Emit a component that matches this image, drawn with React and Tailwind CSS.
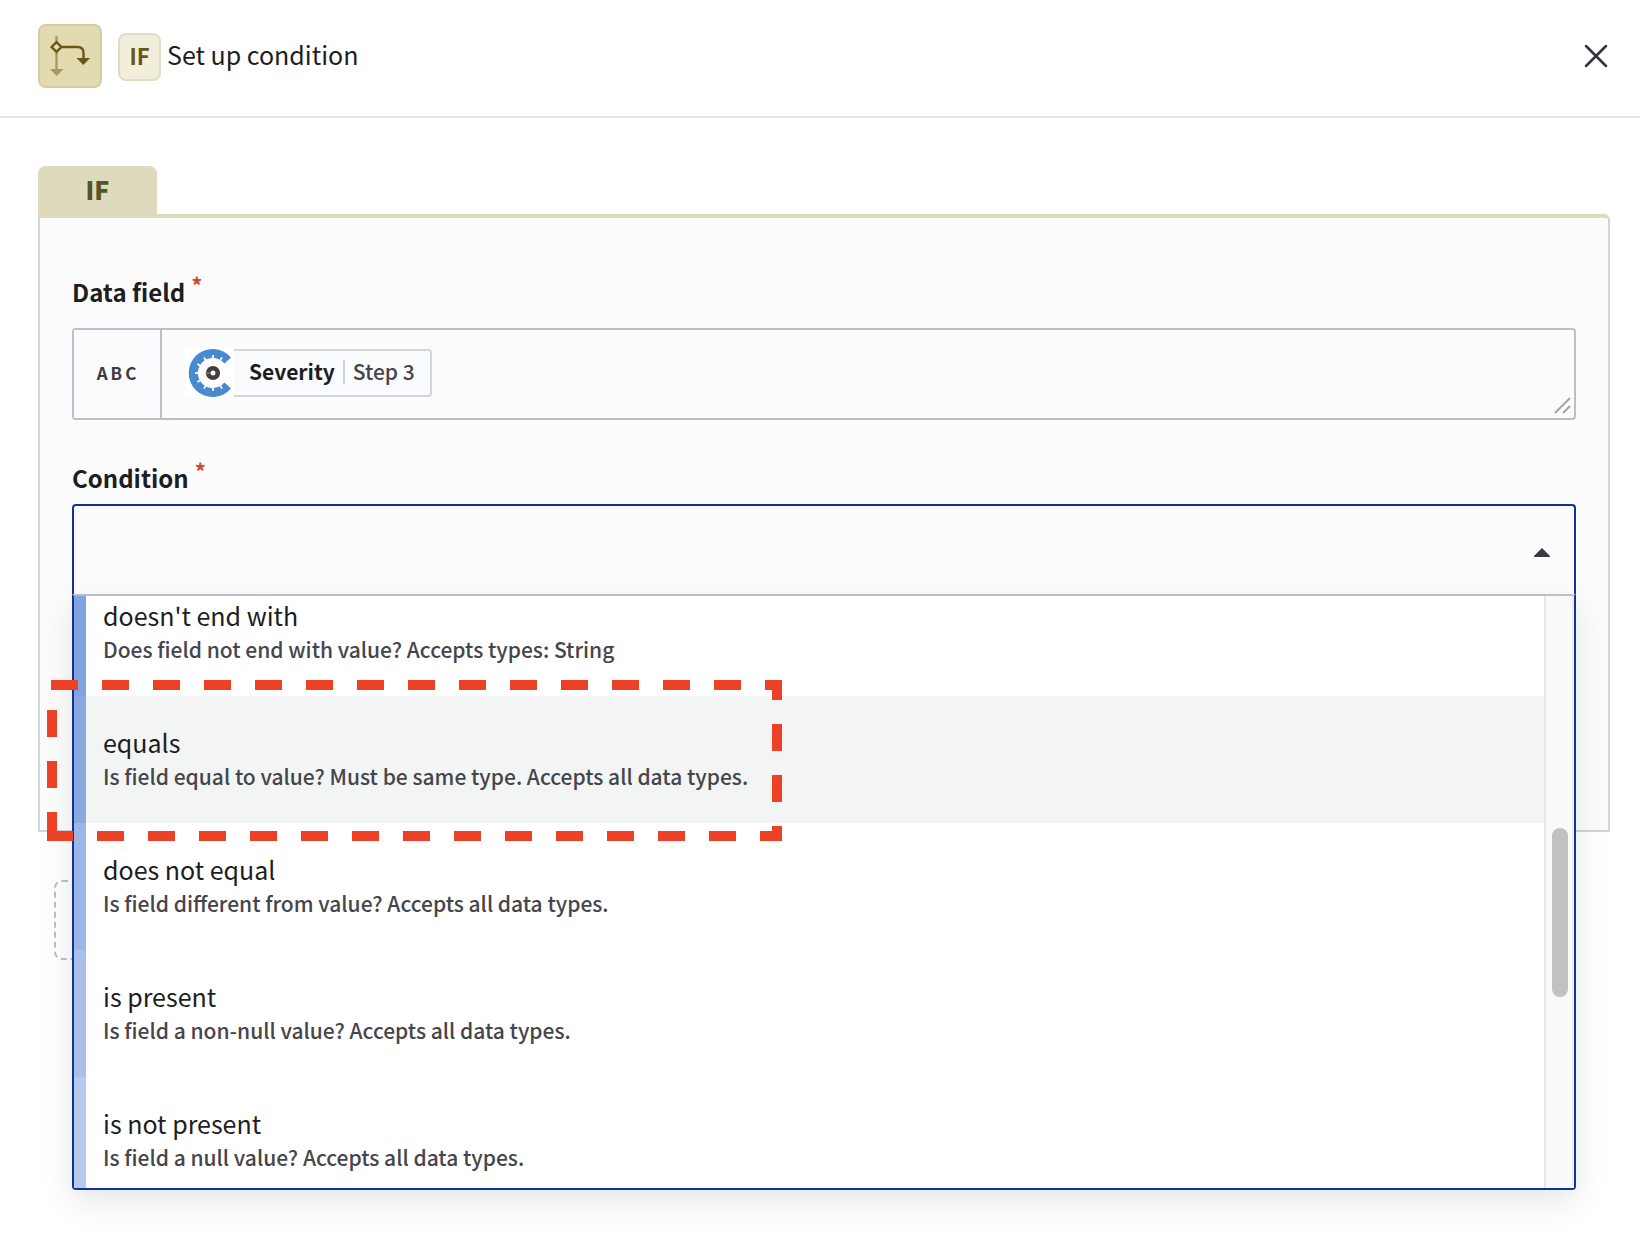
import React from "react";

const OPTIONS = [
  { title: "doesn't end with", text: "Does field not end with value? Accepts types: String", bar: "bg-[#82a3e0]", row: "bg-white" },
  { title: "equals", text: "Is field equal to value? Must be same type. Accepts all data types.", bar: "bg-[#88a8de]", row: "bg-[#f3f5f5]", selected: true },
  { title: "does not equal", text: "Is field different from value? Accepts all data types.", bar: "bg-[#9cb6e7]", row: "bg-white" },
  { title: "is present", text: "Is field a non-null value? Accepts all data types.", bar: "bg-[#a9c0ea]", row: "bg-white" },
  { title: "is not present", text: "Is field a null value? Accepts all data types.", bar: "bg-[#b7caee]", row: "bg-white" },
];

function BranchIcon() {
  return (
    <svg width="60" height="60" viewBox="40 26 60 60" fill="none" aria-hidden="true">
      <path d="M56.5 36V70" stroke="#a89860" strokeWidth="2.4" />
      <path d="M49.8 69H63.6L56.7 76Z" fill="#a89860" />
      <path d="M62 47H77.5Q83.5 47 83.5 53V59" stroke="#6b5517" strokeWidth="2.4" />
      <path d="M76.5 58H90L83.3 65Z" fill="#6b5517" />
      <path d="M56.5 42.2L61.4 47L56.5 51.8L51.6 47Z" fill="#e2dbb0" stroke="#6b5517" strokeWidth="2.4" />
    </svg>
  );
}

function CogLogo() {
  const ticks = [60, 90, 120, 150, 180, 210, 240, 270, 300];
  return (
    <svg className="shrink-0 bg-white" width="48" height="48" viewBox="-27 -24 48 48" fill="none" aria-hidden="true">
      <path d="M18 -15.5A24 24 0 1 0 18 15.5L11.5 9.5A15 15 0 1 1 11.5 -9.5Z" fill="#478bce" />
      {ticks.map((a) => (
        <path key={a} d="M13 0H18" stroke="#fff" strokeWidth="1.8" transform={`rotate(${a})`} />
      ))}
      <circle r="4.8" stroke="#453c3e" strokeWidth="4.6" />
      <path d="M-7.5 0H-3" stroke="#8d8788" strokeWidth="1.2" />
    </svg>
  );
}

function Label({ id, htmlFor, children }) {
  return (
    <label id={id} htmlFor={htmlFor} className="flex items-start gap-1.5 text-[24px] leading-9 font-bold text-[#1d1d22]">
      {children}
      <span className="text-[22px] leading-5 text-[#cb4a2c]">*</span>
    </label>
  );
}

export default function App() {
  return (
    <div className="min-h-screen overflow-hidden bg-white font-['Noto_Sans_CJK_SC',sans-serif] text-[#1d1d22]">
      <header className="flex h-[118px] items-start border-b-2 border-[#e3e6ea] pt-6 pr-[26px] pl-[38px]">
        <div className="h-16 w-16 rounded-lg border-2 border-[#d2cba3] bg-[#e2dbb0]">
          <BranchIcon />
        </div>
        <div className="flex h-16 grow items-center">
          <span className="mt-0.5 ml-4 flex h-12 w-[43px] items-center justify-center rounded-lg border-2 border-[#e0ddcb] bg-[#f1eed9] pb-1 text-[22px] font-bold text-[#6b5517]">
            IF
          </span>
          <h1 className="ml-1.5 grow pb-1 text-[25px] leading-9">Set up condition</h1>
          <button type="button" aria-label="Close" className="flex h-9 w-9 items-center justify-center">
            <svg width="24" height="24" viewBox="0 0 24 24" stroke="#32333b" strokeWidth="2.5" strokeLinecap="round" aria-hidden="true">
              <path d="M2 2L22 22M22 2L2 22" />
            </svg>
          </button>
        </div>
      </header>

      <main className="relative pt-12 pr-[30px] pl-[38px]">
        <div className="flex h-12 w-[119px] items-center justify-center rounded-t-lg bg-[#dddbbc] text-[25px] font-black text-[#55542c]">
          IF
        </div>
        <section className="h-[618px] rounded-tr-md border-2 border-t-4 border-[#cfd4d9] border-t-[#dddbbc] bg-[#fcfcfc] px-8 pt-14">
          <Label id="data-field-label">Data field</Label>
          <div className="mt-[18px] flex h-[92px] rounded border-2 border-[#b8c1c9]">
            <div className="flex w-[88px] items-center justify-center border-r-2 border-[#b8c1c9] bg-[#f9fbfd] pb-0.5 pl-0.5 text-[17px] font-bold tracking-[3px] text-[#3b3b42]">
              ABC
            </div>
            <div role="textbox" tabIndex={0} aria-labelledby="data-field-label" className="flex grow items-center pb-0.5 pl-6">
              <CogLogo />
              <div className="flex h-12 items-center rounded-r border-2 border-l-0 border-[#cfd5dc] bg-[#f9fbfd] px-[15px] pb-0.5 text-[21px]">
                <span className="font-bold">Severity</span>
                <span className="mx-2 h-6 w-0.5 bg-[#cfd5dc]" />
                <span className="font-medium text-[#45454c]">Step 3</span>
              </div>
            </div>
            <svg className="self-end" width="24" height="24" viewBox="0 0 24 24" stroke="#a3a3a3" strokeWidth="2" aria-hidden="true">
              <path d="M5 19L20 4M13 19L20 12" />
            </svg>
          </div>

          <div className="mt-10">
            <Label htmlFor="condition">Condition</Label>
          </div>
          <div className="relative z-10 mt-2">
            <button
              id="condition"
              type="button"
              role="combobox"
              aria-expanded="true"
              aria-controls="condition-options"
              className="flex h-[90px] w-full items-center justify-end rounded-t border-2 border-b-0 border-[#10339b] pt-1 pr-6"
            >
              <svg width="16" height="9" viewBox="0 0 16 9" fill="#3a3b42" aria-hidden="true">
                <path d="M8 0L16 8V9H0V8Z" />
              </svg>
            </button>
            <div className="flex h-[596px] rounded-b border-2 border-[#10339b] border-t-[#b8c1c9] bg-white shadow-[0_12px_32px_rgba(40,60,60,0.12)]">
              <div className="grow overflow-hidden">
                <ul id="condition-options" role="listbox" aria-label="Condition" className="-mt-[27px]">
                  {OPTIONS.map((o) => (
                    <li key={o.title} role="option" aria-selected={!!o.selected} className={`flex h-[127px] ${o.row}`}>
                      <span className={`w-3 ${o.bar}`} />
                      <div className="pt-7 pl-[17px]">
                        <p className="text-[25px] leading-9">{o.title}</p>
                        <p className="text-[21px] leading-8 font-medium text-[#45454c]">{o.text}</p>
                      </div>
                    </li>
                  ))}
                </ul>
              </div>
              <div className="w-[30px] border-x-2 border-l-[#e7e7e8] border-r-[#eeedf0] bg-[#fafafa] pt-[232px] pl-1.5">
                <div className="h-[169px] w-4 rounded-full bg-[#c1c1c1]" />
              </div>
            </div>
          </div>
        </section>
        <div className="mt-12 ml-4 h-20 w-60 rounded-lg border-2 border-dashed border-[#b8c1c9]" />

        <svg className="pointer-events-none absolute top-[558px] left-[42px] z-20" width="744" height="170" viewBox="42 676 744 170" fill="none" stroke="#ec4127" strokeWidth="10" strokeDasharray="27 24" aria-hidden="true">
          <path d="M51 685H777V836H47" />
          <path d="M52 710V836" />
        </svg>
      </main>
    </div>
  );
}
